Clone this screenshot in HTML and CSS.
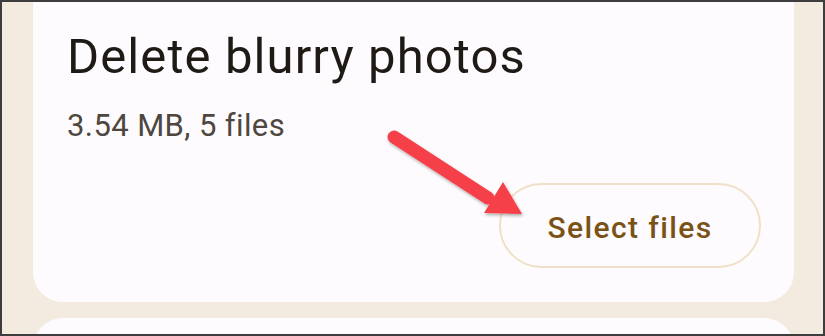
FILE: index.html
```html
<!DOCTYPE html>
<html lang="en">
<head>
    <meta charset="UTF-8">
    <meta name="viewport" content="width=device-width, initial-scale=1.0">
    <title>Delete blurry photos</title>
    <link rel="stylesheet" href="styles.css">
</head>
<body>
    <div class="frame">
        <div class="card">
            <h1 class="title">Delete blurry photos</h1>
            <p class="meta">3.54 MB, 5 files</p>
            <div class="actions">
                <button class="select-btn">Select files</button>
            </div>
        </div>
        <div class="card next"></div>

        <!-- annotation arrow -->
        <svg class="arrow" width="160" height="110" viewBox="0 0 160 110">
            <defs>
                <filter id="shadow" x="-20%" y="-20%" width="140%" height="140%">
                    <feDropShadow dx="1" dy="2" stdDeviation="1.5" flood-color="#000" flood-opacity="0.3"/>
                </filter>
            </defs>
            <g filter="url(#shadow)" fill="#f54048">
                <line x1="14" y1="17" x2="108" y2="78" stroke="#f54048" stroke-width="13" stroke-linecap="round"/>
                <polygon points="123,62 142,94 104,93"/>
            </g>
        </svg>
    </div>
</body>
</html>
```

FILE: styles.css
```css
body {
    margin: 0;
    font-family: Roboto, "Open Sans", sans-serif;
}

.frame {
    position: relative;
    width: 825px;
    height: 336px;
    box-sizing: border-box;
    border: 2px solid #3d3d3d;
    background: #f3ebe0;
    padding: 0 29px 0 31px;
    display: flex;
    flex-direction: column;
    gap: 16px;
    overflow: hidden;
}

.card {
    background: #fdfbfd;
    border-radius: 0 0 30px 30px;
    height: 300px;
    flex-shrink: 0;
    box-sizing: border-box;
    padding: 0 33px 0 34px;
    display: flex;
    flex-direction: column;
}

.card.next {
    border-radius: 30px 30px 0 0;
    height: 40px;
}

.title {
    margin: 27px 0 0;
    font-size: 49px;
    font-weight: 400;
    line-height: 56px;
    color: #1f1a15;
    letter-spacing: 1.1px;
}

.meta {
    margin: 24px 0 0;
    font-size: 31px;
    line-height: 34px;
    color: #4e473f;
    letter-spacing: 0.4px;
}

.actions {
    display: flex;
    justify-content: flex-end;
    margin-top: 40px;
}

.select-btn {
    width: 262px;
    height: 85px;
    border: 2px solid #f1e0c8;
    border-radius: 43px;
    background: transparent;
    font-family: inherit;
    font-size: 30px;
    font-weight: 500;
    letter-spacing: 1.4px;
    color: #7b5216;
    padding: 4px 0 0;
    cursor: pointer;
}

.arrow {
    position: absolute;
    left: 378px;
    top: 118px;
}
```
